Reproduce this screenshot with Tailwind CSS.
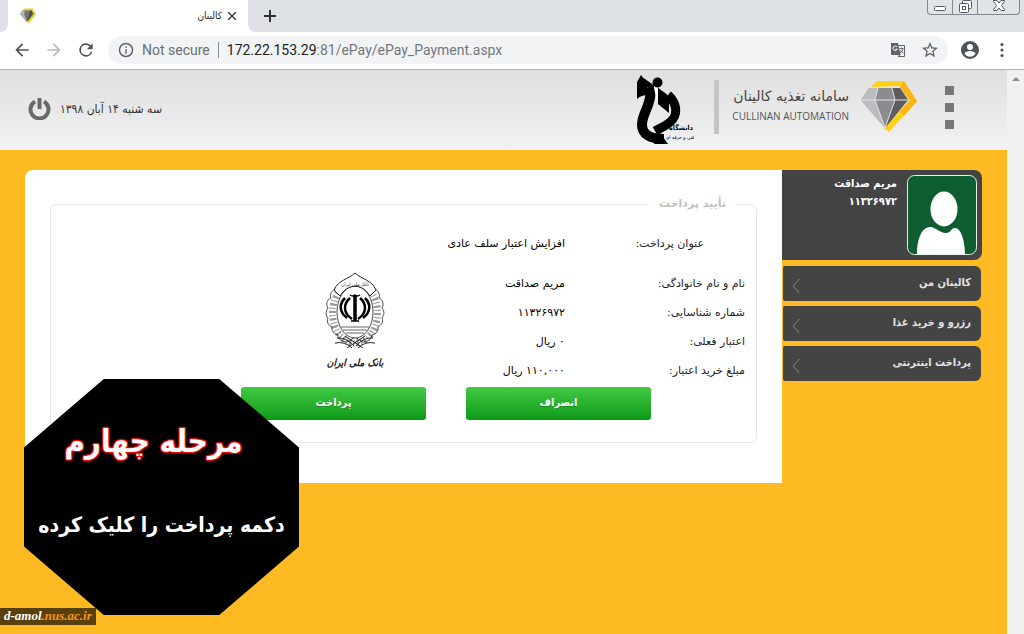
<!DOCTYPE html>
<html lang="fa">
<head>
    <meta charset="UTF-8">
    <meta name="viewport" content="width=device-width, initial-scale=1.0">
    <title>کالینان</title>
    <script src="https://cdn.jsdelivr.net/npm/@tailwindcss/browser@4"></script>
</head>
<body class="min-h-screen flex flex-col bg-[#fdba22] font-['DejaVu_Sans',sans-serif] text-xs text-[#222] relative overflow-x-hidden">

    <!-- Browser tabs -->
    <div class="h-8 flex items-end bg-[#dee1e6]">
        <div class="w-2 self-stretch bg-white"><div class="h-full bg-[#dee1e6] rounded-br-lg"></div></div>
        <div class="w-60 h-8 flex items-center bg-white pl-3 pr-[6px]">
            <svg class="w-4 h-4" viewBox="0 0 56 52">
                <path d="M10 6 16 0h28l12 19-25 32-6-4z" fill="#e6cf27"/>
                <path d="M0 19 8 7h32l6 12-22 28z" fill="#77777a"/>
                <path d="M0 19 8 7h9l-3 12 10 28z" fill="#b5b6b8"/>
                <path d="m31 19 4-12h5l6 12-22 28z" fill="#4f4f51"/>
            </svg>
            <span class="flex-1 text-right text-[10px] font-['DejaVu_Sans_Condensed','DejaVu_Sans',sans-serif]" dir="rtl">کالینان</span>
            <button class="w-5 h-5 flex items-center justify-center" aria-label="Close tab">
                <svg class="w-2 h-2" viewBox="0 0 8 8" stroke="#45484c" stroke-width="1.500"><path d="M0 0 8 8M8 0 0 8"/></svg>
            </button>
        </div>
        <div class="w-2 self-stretch bg-white"><div class="h-full bg-[#dee1e6] rounded-bl-lg"></div></div>
        <button class="w-7 h-8 flex items-center justify-center" aria-label="New tab">
            <svg class="w-3 h-3" viewBox="0 0 12 12" stroke="#333" stroke-width="2"><path d="M6 0v12M0 6h12"/></svg>
        </button>
        <div class="ml-auto mr-1 self-start h-[15px] flex border border-t-0 border-[#83888f] rounded-b bg-[#e0e3e8]">
            <button class="w-[25px] flex items-center justify-center border-r border-[#83888f]" aria-label="Minimize">
                <svg class="w-3 h-3" viewBox="0 0 12 12"><rect x=".5" y="5.500" width="11" height="4" rx="1" fill="#fff" stroke="#555b63"/></svg>
            </button>
            <button class="w-[25px] flex items-start justify-center border-r border-[#83888f]" aria-label="Restore">
                <svg class="w-[13px] h-[13px]" viewBox="0 0 13 13" fill="#fff" stroke="#555b63"><rect x="3.500" y=".5" width="9" height="8" rx="1"/><rect x=".5" y="3.500" width="9" height="9" rx="1"/><rect x="3.500" y="6.500" width="3" height="3"/></svg>
            </button>
            <button class="w-[41px] flex items-start justify-center" aria-label="Close">
                <svg class="w-3 h-[11px]" viewBox="0 0 12 11"><path d="M.5.5h3.500L6 3 8 .5h3.500v1L8.500 5.500l3 4v1H8L6 8l-2 2.500H.5v-1l3-4-3-4z" fill="#fff" stroke="#555b63"/></svg>
            </button>
        </div>
    </div>

    <!-- Address bar -->
    <div class="h-[38px] flex items-center bg-white border-b border-[#b0b2b5] pl-3 pr-3 pb-[2px] font-[Roboto,'Liberation_Sans',sans-serif] text-sm">
        <button class="w-5 h-5" aria-label="Back">
            <svg class="w-5 h-5" viewBox="0 0 24 24" fill="#505357"><path d="M20 11H7.830l5.590-5.590L12 4l-8 8 8 8 1.410-1.410L7.830 13H20z"/></svg>
        </button>
        <button class="w-5 h-5 ml-3" aria-label="Forward">
            <svg class="w-5 h-5" viewBox="0 0 24 24" fill="#b9bbbe"><path d="m12 4-1.410 1.410L16.170 11H4v2h12.170l-5.580 5.590L12 20l8-8z"/></svg>
        </button>
        <button class="w-5 h-5 ml-3" aria-label="Reload">
            <svg class="w-5 h-5" viewBox="0 0 24 24" fill="#505357"><path d="M17.650 6.350A8 8 0 1 0 19.730 14h-2.080A6 6 0 1 1 12 6c1.660 0 3.140.69 4.220 1.780L13 11h7V4z"/></svg>
        </button>
        <div class="ml-3 h-7 flex-1 flex items-center bg-[#f1f3f4] rounded-full pl-[10px] pr-[10px]">
            <svg class="w-4 h-4" viewBox="1 1 22 22" fill="#5f6368"><path d="M11 7h2v2h-2zm0 4h2v6h-2zm1-9a10 10 0 1 0 0 20 10 10 0 0 0 0-20m0 18a8 8 0 1 1 0-16 8 8 0 0 1 0 16"/></svg>
            <span class="ml-2 text-[#6b6f73]">Not secure</span>
            <span class="mx-2 w-px h-4 bg-[#8b8e92]"></span>
            <a href="#" class="flex-1 text-[#74787c]"><span class="text-[#202124]">172.22.153.29</span>:81/ePay/ePay_Payment.aspx</a>
            <button class="w-4 h-4" aria-label="Translate">
                <svg class="w-4 h-4" viewBox="0 0 16 16"><path d="M1 1h7l3 12H1z" fill="#5f6368"/><path d="M8.500 3.500h6v11H8l2.500-2" fill="#f1f3f4" stroke="#5f6368"/><path d="M7 5a2.200 2.200 0 1 0 .3 2H5.500" fill="none" stroke="#fff"/><path d="M9.500 6.500h4M11.500 5.500v1M13 7c-.5 2-1.500 3-3 4M10.500 8c.5 1.500 1.500 2.500 3 3" fill="none" stroke="#5f6368"/></svg>
            </button>
            <button class="w-4 h-4 ml-4" aria-label="Bookmark">
                <svg class="w-4 h-4" viewBox="2 2 20 20" fill="#5f6368"><path d="m22 9.240-7.190-.62L12 2 9.190 8.630 2 9.240l5.460 4.730L5.820 21 12 17.270 18.180 21l-1.630-7.030zM12 15.400l-3.760 2.270 1-4.280-3.320-2.880 4.380-.38L12 6.100l1.710 4.040 4.380.38-3.320 2.880 1 4.280z"/></svg>
            </button>
        </div>
        <button class="w-5 h-5 ml-3" aria-label="Profile">
            <svg class="w-5 h-5" viewBox="2 2 20 20" fill="#505357"><path d="M12 3a9 9 0 1 0 0 18 9 9 0 0 0 0-18m0 3a3 3 0 1 1 0 6 3 3 0 0 1 0-6m0 12.800a6.400 6.400 0 0 1-5.400-3c0-1.800 3.600-2.800 5.400-2.800s5.400 1 5.400 2.800a6.400 6.400 0 0 1-5.400 3"/></svg>
        </button>
        <button class="w-5 h-5 ml-3" aria-label="Menu">
            <svg class="w-5 h-5" viewBox="0 0 20 20" fill="#505357"><circle cx="10" cy="4.500" r="1.600"/><circle cx="10" cy="10" r="1.600"/><circle cx="10" cy="15.500" r="1.600"/></svg>
        </button>
    </div>

    <div class="flex-1 flex">
        <div class="flex-1 min-w-0">

            <!-- Site header -->
            <header class="h-20 flex items-center justify-between bg-linear-to-b from-[#dfdfdf] to-[#f2f2f2] pl-7 pr-[53px]">
                <div class="flex items-center gap-[9px] pb-[2px]">
                    <button aria-label="خروج">
                        <svg class="w-[23px] h-[22px]" viewBox="0 0 22 22" fill="none" stroke="#69696a" stroke-width="4"><path d="M6.500 3.600a9 9 0 1 0 9 0"/><path d="M11 0v11"/></svg>
                    </button>
                    <span class="text-xs text-[#333] font-['DejaVu_Sans_Condensed','DejaVu_Sans',sans-serif]" dir="rtl">سه شنبه ۱۴ آبان ۱۳۹۸</span>
                </div>
                <div class="flex items-start">
                    <svg class="w-[58px] h-[72px]" viewBox="0 0 58 72">
                        <circle cx="21.500" cy="8.500" r="5" fill="#000"/>
                        <path d="M1 25V8l4-7c3 5 9 6 13 11v14c-2-3-5-5-6-8l-1-6v9C8 21 4 22 1 25z" fill="#000"/>
                        <path d="M15 14C15 34 6 38 6 51c0 9 8 14 22 14" fill="none" stroke="#000" stroke-width="10"/>
                        <path d="M22 56 32 70H18z" fill="#000"/>
                        <path d="M32 21c8 7 10 17 5 24-4 6-11 8-18 12" fill="none" stroke="#000" stroke-width="9"/>
                        <path d="M18 14 21 28l2-14z" fill="#fff"/>
                        <path d="M22 13c2 4 9 5 11 11v15l-11-9z" fill="#000"/>
                        <g fill="#000" class="font-['DejaVu_Sans_Condensed','DejaVu_Sans',sans-serif]">
                            <text x="45" y="56" text-anchor="middle" direction="rtl" class="text-[7px] font-bold">دانشگاه</text>
                            <text x="44" y="65" text-anchor="middle" direction="rtl" class="text-[5px]">فنی و حرفه ای</text>
                        </g>
                    </svg>
                    <span class="ml-5 mt-[6px] w-[5px] h-[54px] bg-[#c5c5c6]"></span>
                    <div class="ml-[11px] mt-3 w-[119px] text-right">
                        <p class="text-sm leading-5 text-[#444] whitespace-nowrap" dir="rtl">سامانه تغذیه کالینان</p>
                        <p class="text-[10px] leading-5 text-[#555] font-['Open_Sans',sans-serif] whitespace-nowrap" dir="ltr">CULLINAN AUTOMATION</p>
                    </div>
                    <svg class="ml-3 mt-[6px] w-14 h-[52px]" viewBox="0 0 56 52">
                        <path d="m10 7 6-6h27l13 20-28 31-5-4 26-28-9-14z" fill="#fcd116"/>
                        <path d="m43 1 13 20-3 4-5-5-9-13zM56 21 43 36l-4-5 10-11z" fill="#f9b517"/>
                        <path d="M0 20 8 8h31l8 12-23 28z" fill="#77787b"/>
                        <path d="M0 20 8 8h9l-3 12 10 28z" fill="#bcbdc0"/>
                        <path d="M17 8h14l3 12-10 28-10-28z" fill="#8b8c90"/>
                        <path d="m31 8 3 12-10 28 23-28-8-12z" fill="#5d5d60"/>
                        <path d="M0 20h47M17 8l-3 12 10 28 10-28-3-12" fill="none" stroke="#e3e3e4"/>
                    </svg>
                    <button class="ml-7 mt-3 flex flex-col gap-2" aria-label="منو">
                        <span class="w-[9px] h-[9px] bg-[#77777a]"></span>
                        <span class="w-[9px] h-[9px] bg-[#77777a]"></span>
                        <span class="w-[9px] h-[9px] bg-[#77777a]"></span>
                    </button>
                </div>
            </header>

            <main class="flex items-start pt-5 px-[25px]" dir="rtl">

                <!-- Side menu -->
                <aside class="w-[200px] shrink-0 font-['DejaVu_Sans_Condensed','DejaVu_Sans',sans-serif]">
                    <div class="h-[90px] flex gap-[10px] bg-[#444] rounded-s-lg p-[5px] text-white font-bold text-[11px]">
                        <svg class="w-[70px] h-20 shrink-0" viewBox="0 0 70 80">
                            <rect x=".5" y=".5" width="69" height="79" rx="7" fill="#0f5e31" stroke="#e8efe9"/>
                            <ellipse cx="37" cy="34" rx="13.500" ry="17.500" fill="#fff"/>
                            <path d="M10 79c0-13 4-27 13-27 6 0 9 6 16 6 5 0 5-5 9-5 6 0 10 13 10 26z" fill="#fff"/>
                        </svg>
                        <div class="leading-[18px]">
                            <p>مریم صداقت</p>
                            <p>۱۱۳۲۶۹۷۲</p>
                        </div>
                    </div>
                    <nav class="mt-[6px] mx-px flex flex-col gap-[5px] text-[11px] font-bold text-[#e2e2e2]">
                        <a href="#" class="h-[35px] flex items-center justify-between bg-[#444] rounded-s-md rounded-e-xs pr-[10px] pl-[9px]">
                            <span>کالینان من</span>
                            <svg class="w-2 h-4 mt-1" viewBox="0 0 8 16" fill="none" stroke="#888"><path d="M7.500 1 1 8l6.500 7"/></svg>
                        </a>
                        <a href="#" class="h-[35px] flex items-center justify-between bg-[#444] rounded-s-md rounded-e-xs pr-[10px] pl-[9px]">
                            <span>رزرو و خرید غذا</span>
                            <svg class="w-2 h-4 mt-1" viewBox="0 0 8 16" fill="none" stroke="#888"><path d="M7.500 1 1 8l6.500 7"/></svg>
                        </a>
                        <a href="#" class="h-[35px] flex items-center justify-between bg-[#444] rounded-s-md rounded-e-xs pr-[10px] pl-[9px]">
                            <span>پرداخت اینترنتی</span>
                            <svg class="w-2 h-4 mt-1" viewBox="0 0 8 16" fill="none" stroke="#888"><path d="M7.500 1 1 8l6.500 7"/></svg>
                        </a>
                    </nav>
                </aside>

                <!-- Payment form -->
                <form class="flex-1 bg-white rounded-tl-lg px-[25px] pt-[22px] pb-10">
                    <fieldset class="border border-[#e8e8e8] rounded-md pb-[22px]">
                        <legend class="mr-5 px-[10px] leading-6 text-[#c0c0c0] font-bold text-[11px]">تأیید پرداخت</legend>
                        <div class="flex items-start pr-[11px] pt-[2px]">
                            <table class="w-[320px] text-[11px] text-right">
                                <tr class="h-[52px]">
                                    <th class="w-[180px] font-normal pr-[41px]">عنوان پرداخت:</th>
                                    <td class="text-black">افزایش اعتبار سلف عادی</td>
                                </tr>
                                <tr class="h-[29px]">
                                    <th class="font-normal">نام و نام خانوادگی:</th>
                                    <td class="text-black">مریم صداقت</td>
                                </tr>
                                <tr class="h-[29px]">
                                    <th class="font-normal">شماره شناسایی:</th>
                                    <td class="text-black">۱۱۳۲۶۹۷۲</td>
                                </tr>
                                <tr class="h-[29px]">
                                    <th class="font-normal">اعتبار فعلی:</th>
                                    <td class="text-black">۰ ریال</td>
                                </tr>
                                <tr class="h-[29px]">
                                    <th class="font-normal">مبلغ خرید اعتبار:</th>
                                    <td class="text-black">۱۱۰,۰۰۰ ریال</td>
                                </tr>
                            </table>
                            <div class="w-[140px] pt-[54px] flex justify-center">
                                <svg class="w-16 h-[102px]" viewBox="0 0 64 102" fill="none" stroke="#222">
                                    <ellipse cx="32" cy="41" rx="22.500" ry="30" stroke-width="7" stroke-dasharray="2 2 1 2" stroke="#999" pathLength="154"/>
                                    <path d="M12 17c-5 3-5 7-4 9-5 2-5 7-3 10-3 4-2 8 0 10-2 4 1 8 4 9-1 5 3 7 6 8 0 5 5 7 9 7l8-5 8 5c4 0 8-2 9-7 4-1 7-4 6-8 3-2 6-5 4-9 2-3 3-6 0-10 2-4 1-8-3-10 1-3 0-7-4-9" stroke-width=".8"/>
                                    <ellipse cx="32" cy="40" rx="18" ry="26" fill="#fff" stroke-width=".8"/>
                                    <path d="M11 18C15 8 26 7 32 1c6 6 17 7 21 17l-6 6C39 11 25 11 17 24z" fill="#fff" stroke-width="1"/>
                                    <path d="M32 24v25" stroke="#000" stroke-width="3.500"/>
                                    <path d="M27 23q3 2 5 0 2 2 5 0" stroke="#000" stroke-width="1.500"/>
                                    <path d="M27 26c-7 6-7 15 2 21M37 26c7 6 7 15-2 21M22 26c-6 6-6 14 2 20M42 26c6 6 6 14-2 20" stroke="#000" stroke-width="2.500"/>
                                    <path d="M28 49h8" stroke="#000" stroke-width="1.500"/>
                                    <path d="M18 55h28M20 58h24M23 61h18" stroke-width=".7"/>
                                    <path d="M14 66q9-1 17 8M12 71q10-2 17 5M50 66q-9-1-17 8M52 71q-10-2-17 5M22 64l18 12M42 64 24 76" stroke-width="1"/>
                                    <g fill="#222" stroke="none" class="font-['DejaVu_Sans_Condensed','DejaVu_Sans',sans-serif]">
                                        <text x="32" y="14" text-anchor="middle" direction="rtl" class="text-[5px]">بانک ملی ایران</text>
                                        <text x="32" y="94" text-anchor="middle" direction="rtl" class="text-[10px] font-bold italic">بانک ملی ایران</text>
                                    </g>
                                </svg>
                            </div>
                        </div>
                        <div class="mt-px pr-[105px] flex gap-10 text-white font-bold text-[11px] font-['DejaVu_Sans_Condensed','DejaVu_Sans',sans-serif]">
                            <button type="button" class="w-[185px] h-[33px] rounded-[3px] bg-linear-to-b from-[#41c943] to-[#069b18] text-shadow-xs">انصراف</button>
                            <button type="submit" class="w-[185px] h-[33px] rounded-[3px] bg-linear-to-b from-[#41c943] to-[#069b18] text-shadow-xs">پرداخت</button>
                        </div>
                    </fieldset>
                </form>
            </main>
        </div>

        <!-- Scrollbar -->
        <div class="w-[17px] bg-[#f1f1f1] flex justify-center pt-[7px]">
            <svg class="w-2 h-1" viewBox="0 0 8 4" fill="#8b8b8b"><path d="M0 4 4 0l4 4z"/></svg>
        </div>
    </div>

    <!-- Step callout -->
    <div class="absolute left-6 top-[379px] w-[275px] h-[236px] bg-black text-white font-bold text-center whitespace-nowrap pt-9 pr-4 font-['DejaVu_Sans_Condensed','DejaVu_Sans',sans-serif] [clip-path:polygon(29%_0,71%_0,100%_29%,100%_71%,71%_100%,29%_100%,0_71%,0_29%)]" dir="rtl">
        <h2 class="text-[31px] leading-[52px] [text-shadow:0_0_2px_#f00,1px_1px_1px_#f00,-1px_-1px_1px_#f00,1px_-1px_1px_#f00,-1px_1px_1px_#f00]">مرحله چهارم</h2>
        <p class="mt-8 -mr-4 text-[21px] leading-[52px]">دکمه پرداخت را کلیک کرده</p>
    </div>

    <!-- Watermark -->
    <a href="#" class="absolute left-0 top-[608px] w-24 h-[17px] bg-[#3b2a0a]/85 pl-1 text-[13px] leading-4 font-bold italic text-white font-['Liberation_Serif',serif] whitespace-nowrap" dir="ltr">d-amol<span class="text-[#f7941d]">.nus.ac.ir</span></a>
</body>
</html>
